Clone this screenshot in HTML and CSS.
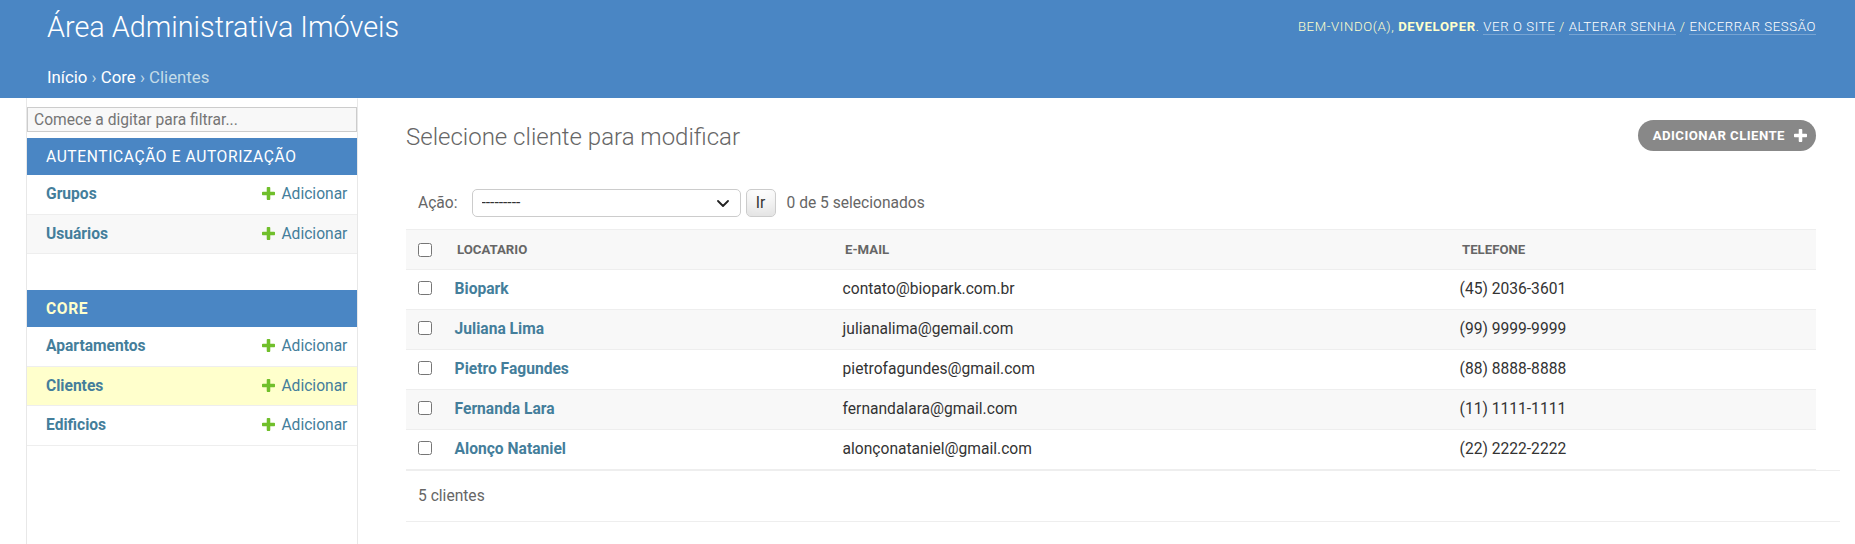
FILE: index.html
```html
<!DOCTYPE html>
<html lang="pt-br">
<head>
<meta charset="utf-8">
<title>Selecione cliente para modificar | Área Administrativa Imóveis</title>
<link rel="stylesheet" href="styles.css">
</head>
<body>
<header class="header">
  <div class="topbar">
    <h1 class="site-name">Área Administrativa Imóveis</h1>
    <div class="user-tools">Bem-vindo(a), <strong>developer</strong>. <a href="#">Ver o site</a> / <a href="#">Alterar senha</a> / <a href="#">Encerrar sessão</a></div>
  </div>
  <nav class="breadcrumbs"><a href="#">Início</a> › <a href="#">Core</a> › Clientes</nav>
</header>
<div class="main">
  <div class="toggle-nav"></div>
  <aside class="sidebar">
    <input class="nav-filter" type="search" placeholder="Comece a digitar para filtrar...">
    <table class="module">
      <caption><a class="section" href="#">Autenticação e Autorização</a></caption>
      <tr class="row1"><th><a href="#">Grupos</a></th><td><a class="addlink" href="#"><svg class="plus" viewBox="192 128 1408 1408" width="13" height="13"><path fill="#70bf2b" d="M1600 736v192q0 40-28 68t-68 28h-416v416q0 40-28 68t-68 28h-192q-40 0-68-28t-28-68v-416h-416q-40 0-68-28t-28-68v-192q0-40 28-68t68-28h416v-416q0-40 28-68t68-28h192q40 0 68 28t28 68v416h416q40 0 68 28t28 68z"/></svg>Adicionar</a></td></tr>
      <tr class="row2"><th><a href="#">Usuários</a></th><td><a class="addlink" href="#"><svg class="plus" viewBox="192 128 1408 1408" width="13" height="13"><path fill="#70bf2b" d="M1600 736v192q0 40-28 68t-68 28h-416v416q0 40-28 68t-68 28h-192q-40 0-68-28t-28-68v-416h-416q-40 0-68-28t-28-68v-192q0-40 28-68t68-28h416v-416q0-40 28-68t68-28h192q40 0 68 28t28 68v416h416q40 0 68 28t28 68z"/></svg>Adicionar</a></td></tr>
    </table>
    <table class="module current-app">
      <caption><a class="section" href="#">Core</a></caption>
      <tr class="row1"><th><a href="#">Apartamentos</a></th><td><a class="addlink" href="#"><svg class="plus" viewBox="192 128 1408 1408" width="13" height="13"><path fill="#70bf2b" d="M1600 736v192q0 40-28 68t-68 28h-416v416q0 40-28 68t-68 28h-192q-40 0-68-28t-28-68v-416h-416q-40 0-68-28t-28-68v-192q0-40 28-68t68-28h416v-416q0-40 28-68t68-28h192q40 0 68 28t28 68v416h416q40 0 68 28t28 68z"/></svg>Adicionar</a></td></tr>
      <tr class="current-model"><th><a href="#">Clientes</a></th><td><a class="addlink" href="#"><svg class="plus" viewBox="192 128 1408 1408" width="13" height="13"><path fill="#70bf2b" d="M1600 736v192q0 40-28 68t-68 28h-416v416q0 40-28 68t-68 28h-192q-40 0-68-28t-28-68v-416h-416q-40 0-68-28t-28-68v-192q0-40 28-68t68-28h416v-416q0-40 28-68t68-28h192q40 0 68 28t28 68v416h416q40 0 68 28t28 68z"/></svg>Adicionar</a></td></tr>
      <tr class="row1"><th><a href="#">Edificios</a></th><td><a class="addlink" href="#"><svg class="plus" viewBox="192 128 1408 1408" width="13" height="13"><path fill="#70bf2b" d="M1600 736v192q0 40-28 68t-68 28h-416v416q0 40-28 68t-68 28h-192q-40 0-68-28t-28-68v-416h-416q-40 0-68-28t-28-68v-192q0-40 28-68t68-28h416v-416q0-40 28-68t68-28h192q40 0 68 28t28 68v416h416q40 0 68 28t28 68z"/></svg>Adicionar</a></td></tr>
    </table>
  </aside>
  <main class="content">
    <div class="content-head">
      <h1 class="page-title">Selecione cliente para modificar</h1>
      <a class="addbtn" href="#">Adicionar cliente<svg viewBox="192 128 1408 1408" width="13" height="13"><path fill="#fff" d="M1600 736v192q0 40-28 68t-68 28h-416v416q0 40-28 68t-68 28h-192q-40 0-68-28t-28-68v-416h-416q-40 0-68-28t-28-68v-192q0-40 28-68t68-28h416v-416q0-40 28-68t68-28h192q40 0 68 28t28 68v416h416q40 0 68 28t28 68z"/></svg></a>
    </div>
    <form class="changelist">
      <div class="actions">
        <label class="action-label">Ação:</label>
        <span class="select-wrap">
          <select class="action-select"><option>---------</option><option>Excluir clientes selecionados</option></select>
          <svg class="chevron" viewBox="0 0 12 7" width="12" height="7"><path d="M1 1l5 5 5-5" fill="none" stroke="#222" stroke-width="1.8" stroke-linecap="round" stroke-linejoin="round"/></svg>
        </span>
        <button class="go-button" type="button">Ir</button>
        <span class="counter">0 de 5 selecionados</span>
      </div>
      <table class="results">
        <thead>
          <tr>
            <th class="col-check"><input type="checkbox" class="cb"></th>
            <th class="col-name">Locatario</th>
            <th class="col-email">E-mail</th>
            <th class="col-phone">Telefone</th>
          </tr>
        </thead>
        <tbody>
          <tr><td class="col-check"><input type="checkbox" class="cb"></td><th><a href="#">Biopark</a></th><td>contato@biopark.com.br</td><td>(45) 2036-3601</td></tr>
          <tr><td class="col-check"><input type="checkbox" class="cb"></td><th><a href="#">Juliana Lima</a></th><td>julianalima@gemail.com</td><td>(99) 9999-9999</td></tr>
          <tr><td class="col-check"><input type="checkbox" class="cb"></td><th><a href="#">Pietro Fagundes</a></th><td>pietrofagundes@gmail.com</td><td>(88) 8888-8888</td></tr>
          <tr><td class="col-check"><input type="checkbox" class="cb"></td><th><a href="#">Fernanda Lara</a></th><td>fernandalara@gmail.com</td><td>(11) 1111-1111</td></tr>
          <tr><td class="col-check"><input type="checkbox" class="cb"></td><th><a href="#">Alonço Nataniel</a></th><td>alonçonataniel@gmail.com</td><td>(22) 2222-2222</td></tr>
        </tbody>
      </table>
      <p class="paginator">5 clientes</p>
    </form>
  </main>
</div>
</body>
</html>
```
FILE: styles.css
```css
* { box-sizing: border-box; }
html, body { margin: 0; padding: 0; }
body {
  font-family: Roboto, "Liberation Sans", Arial, sans-serif;
  font-size: 16.8px;
  color: #333;
  background: #fff;
  min-height: 100vh;
  display: flex;
  flex-direction: column;
}
a { color: #447e9b; text-decoration: none; }

/* header */
.header { background: #4a86c4; color: #ffc; }
.topbar {
  display: flex;
  justify-content: space-between;
  align-items: center;
  height: 54px;
  padding: 10px 39px 10px 47px;
}
.site-name {
  margin: 0;
  font-weight: 300;
  font-size: 28.8px;
  line-height: 34px;
  color: #fff;
}
.user-tools {
  font-size: 13.2px;
  font-weight: 300;
  letter-spacing: 0.6px;
  text-transform: uppercase;
  line-height: 16px;
  color: #ffc;
}
.user-tools strong { font-weight: 700; }
.user-tools a { color: #fff; border-bottom: 1px solid rgba(255,255,255,0.25); }
.breadcrumbs {
  padding: 13px 47px 11px;
  font-size: 16.8px;
  line-height: 20px;
  color: #c4dce8;
}
.breadcrumbs a { color: #fff; }

/* layout */
.main { display: flex; flex: 1; }
.toggle-nav { flex: 0 0 27px; border-right: 1px solid #e8e8e8; }
.sidebar {
  flex: 0 0 331px;
  border-right: 1px solid #e8e8e8;
  border-top: 1px solid transparent;
}
.nav-filter {
  display: block;
  width: 100%;
  height: 25px;
  margin: 8px 0 6px;
  padding: 2px 6px;
  border: 1px solid #ccc;
  background: #f8f8f8;
  font-family: Roboto, "Liberation Sans", Arial, sans-serif;
  font-size: 15.6px;
  color: #333;
  outline: none;
  -webkit-appearance: none;
  appearance: none;
  border-radius: 0;
}
.nav-filter::placeholder { color: #757575; }
.module {
  width: 100%;
  border-collapse: collapse;
  margin-bottom: 36px;
}
.module caption {
  text-align: left;
  background: #4a86c4;
  padding: 10px 10px 9px 19px;
  font-size: 15.6px;
  line-height: 18px;
  letter-spacing: 0.6px;
  text-transform: uppercase;
  font-weight: 400;
}
.module caption a { color: #fff; }
.current-app caption a { color: #ffc; font-weight: 700; }
.module th, .module td {
  padding: 10px 9.6px 9.4px;
  font-size: 15.6px;
  line-height: 19.2px;
  border-bottom: 1px solid #eee;
  vertical-align: top;
}
.module th { text-align: left; width: 100%; padding-left: 19px; font-weight: 700; }
.module td { white-space: nowrap; }
.module tr.row2 { background: #f8f8f8; }
.module tr.current-model { background: #ffc; }
.addlink { display: inline-block; line-height: 19.2px; vertical-align: top; }
.addlink .plus { display: inline-block; vertical-align: -1px; margin-right: 6px; }

/* content */
.content {
  flex: 1;
  min-width: 0;
  padding: 25px 39px 24px 48px;
}
.content-head {
  display: flex;
  justify-content: space-between;
  align-items: flex-start;
  margin-bottom: 26px;
}
.page-title {
  margin: 0;
  font-weight: 300;
  font-size: 24px;
  line-height: 28px;
  color: #666;
}
.addbtn {
  display: flex;
  align-items: center;
  gap: 9px;
  height: 31px;
  margin-top: -3px;
  padding: 0 9px 0 15px;
  border-radius: 16px;
  background: #888;
  color: #fff;
  font-size: 13.2px;
  font-weight: 700;
  letter-spacing: 0.45px;
  text-transform: uppercase;
}

.actions {
  display: flex;
  align-items: center;
  height: 52px;
  padding: 12px;
  color: #666;
  font-size: 15.6px;
}
.select-wrap {
  position: relative;
  display: block;
  margin-left: 14px;
  height: 28px;
}
.action-select {
  display: block;
  width: 269px;
  height: 28px;
  padding: 0 0 0 9px;
  border: 1px solid #ccc;
  border-radius: 5px;
  background: #fff;
  color: #333;
  font-family: Roboto, "Liberation Sans", Arial, sans-serif;
  font-size: 15.6px;
  -webkit-appearance: none;
  appearance: none;
  outline: none;
}
.chevron {
  position: absolute;
  right: 12px;
  top: 11px;
  pointer-events: none;
}
.go-button {
  height: 28px;
  width: 30px;
  margin-left: 5px;
  padding: 0;
  border: 1px solid #ccc;
  border-radius: 5px;
  background: #fff;
  box-shadow: inset 0 -18px 24px -12px rgba(0,0,0,0.15);
  color: #333;
  font-family: Roboto, "Liberation Sans", Arial, sans-serif;
  font-size: 15.6px;
}
.counter { margin-left: 11px; }

.results {
  width: 100%;
  border-collapse: collapse;
  table-layout: fixed;
}
.results thead th {
  background: #f8f8f8;
  border-top: 1px solid #eee;
  border-bottom: 1px solid #eee;
  color: #666;
  font-size: 13.2px;
  font-weight: 700;
  text-transform: uppercase;
  text-align: left;
  padding: 9.6px 12px;
  line-height: 19.2px;
  height: 40px;
  vertical-align: middle;
}
.results .col-check { width: 39px; }
.results .col-name { width: 388px; }
.results .col-email { width: 617px; }
.results thead th.col-check { padding: 0 0 0 12px; }
.results tbody td, .results tbody th {
  padding: 9.6px;
  font-size: 15.6px;
  line-height: 19.2px;
  border-bottom: 1px solid #eee;
  vertical-align: top;
  text-align: left;
  height: 40px;
}
.results tbody th { font-weight: 700; }
.results tbody tr:nth-child(even) { background: #f8f8f8; }
.results tbody td.col-check { padding: 11px 0 0 12px; }
.cb { display: block; width: 14px; height: 14px; margin: 0; }

.paginator {
  margin: 0 -24px 0 0;
  padding: 12px;
  line-height: 26px;
  font-size: 15.6px;
  color: #666;
  border-top: 1px solid #eee;
  border-bottom: 1px solid #eee;
}
```
